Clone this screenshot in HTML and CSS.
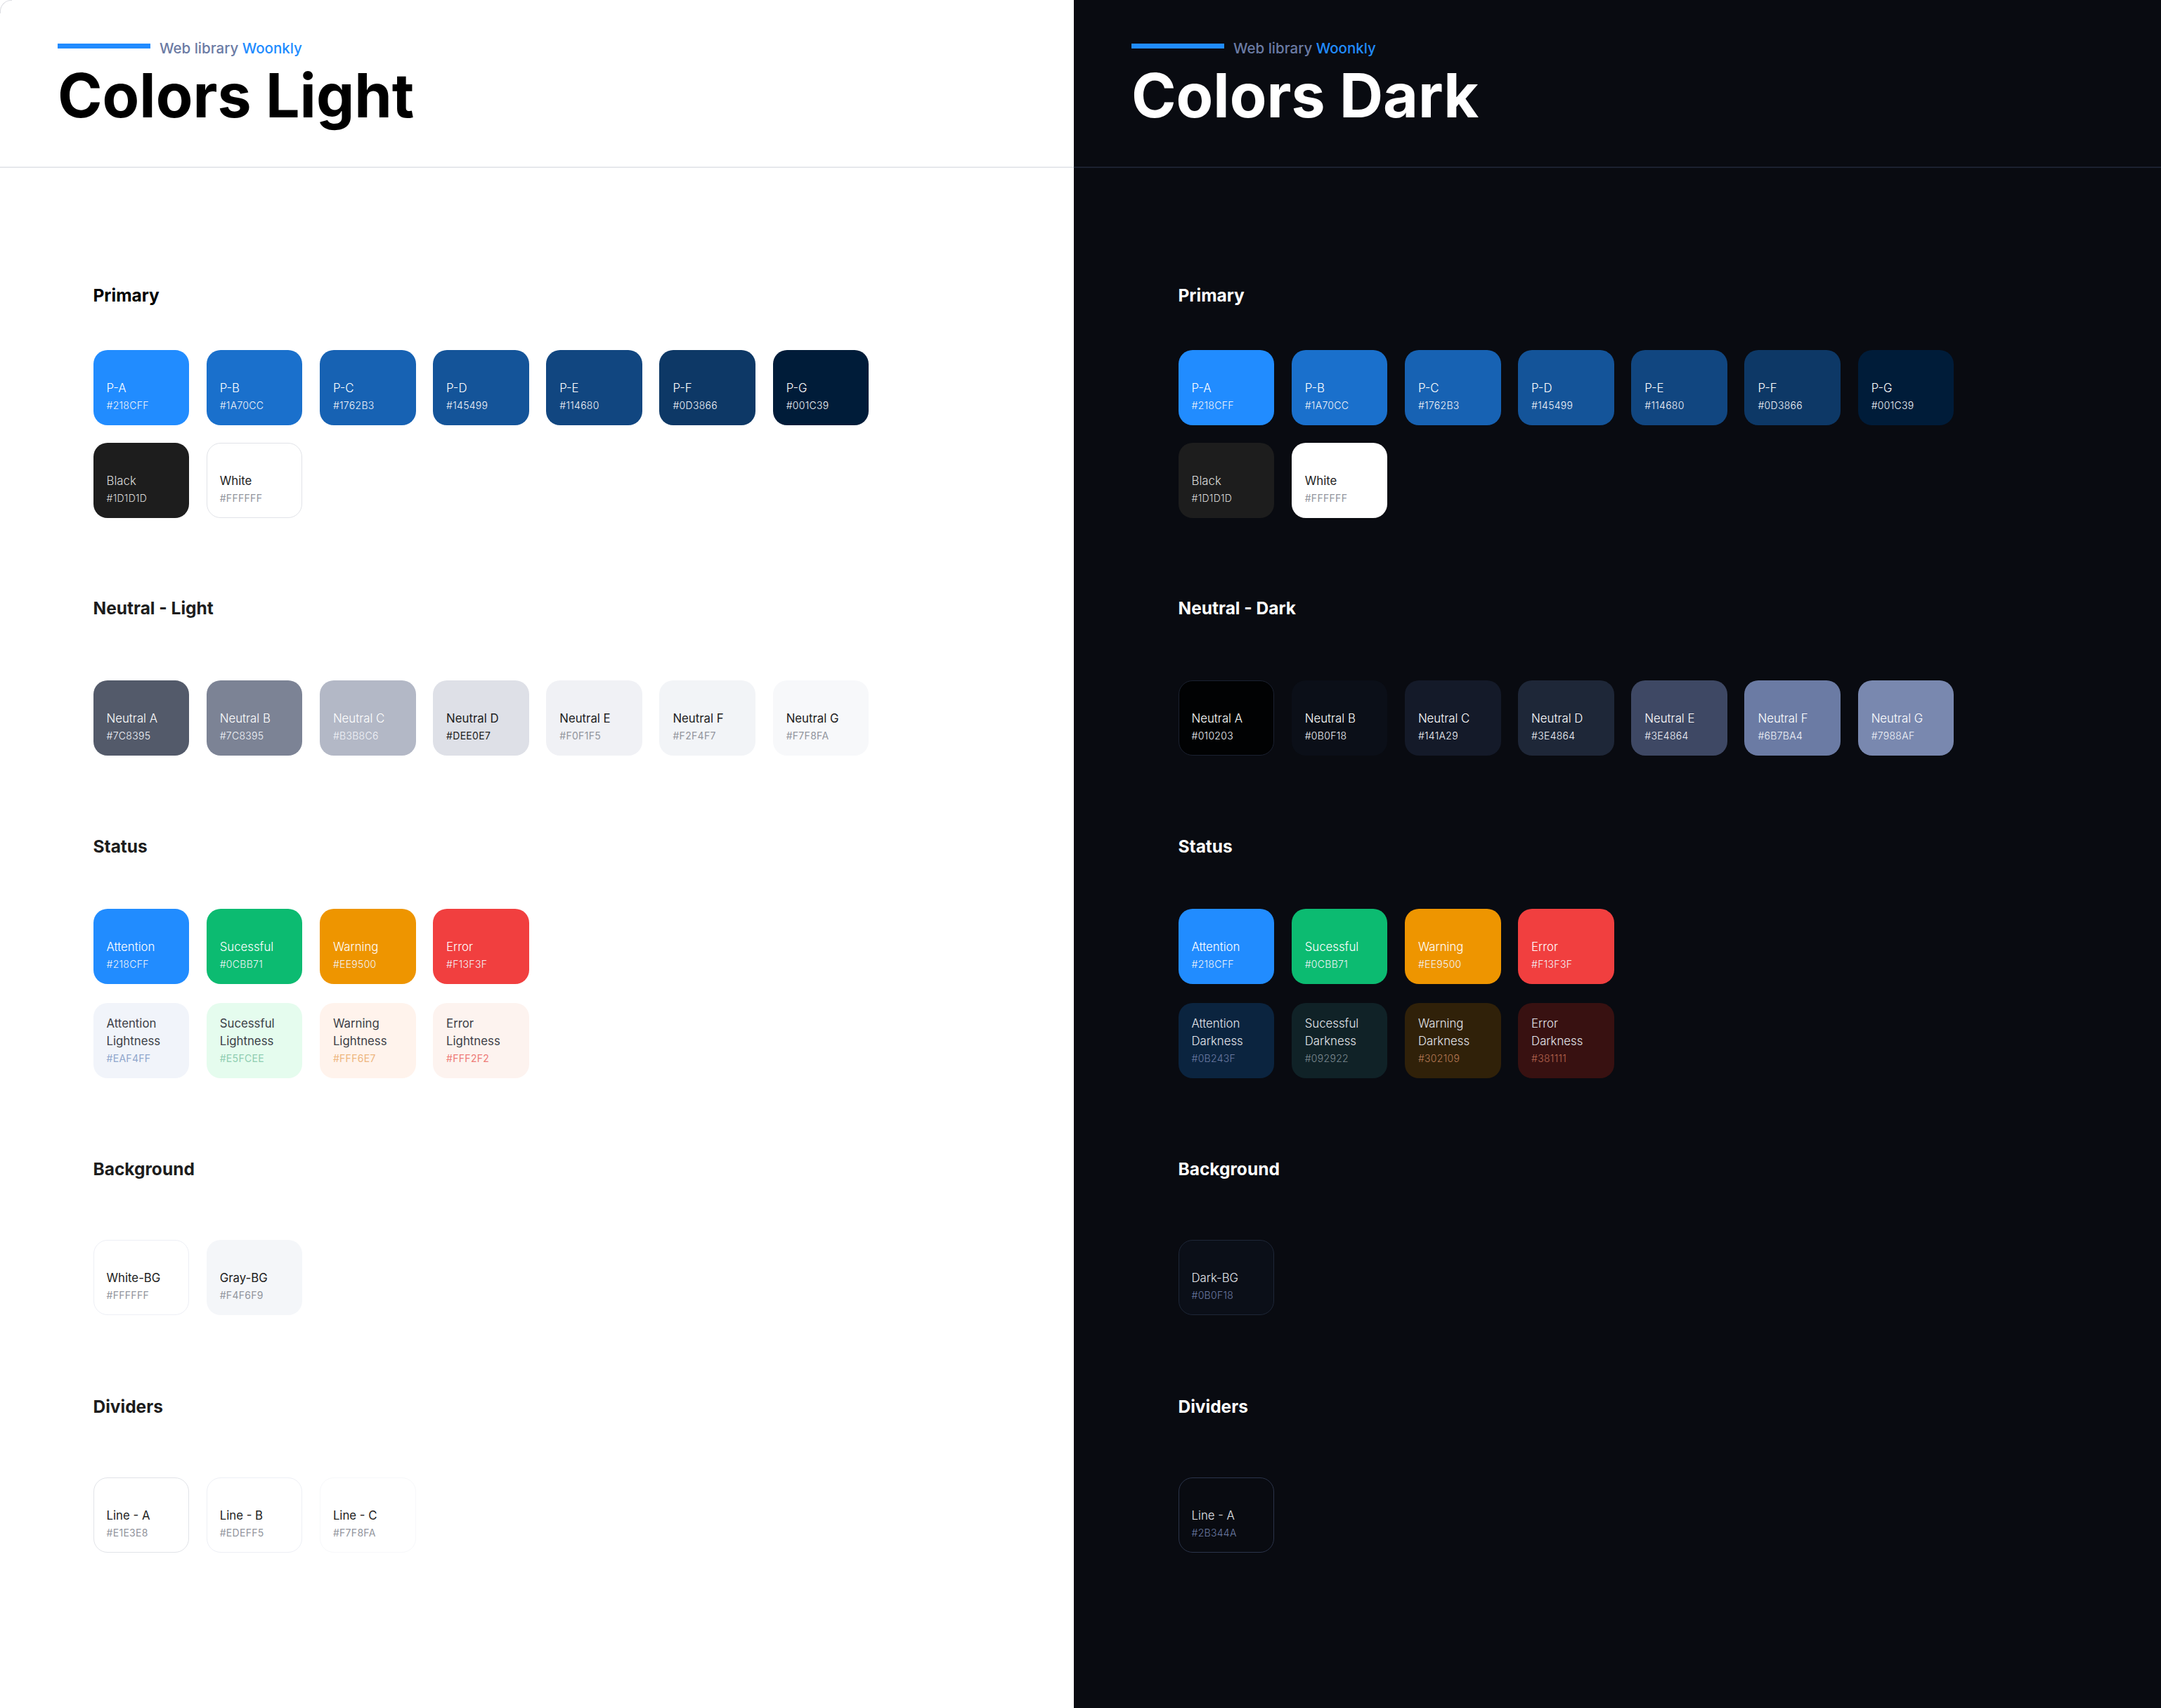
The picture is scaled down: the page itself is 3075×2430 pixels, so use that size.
FILE: index.html
```html
<!DOCTYPE html>
<html lang="en">
<head>
<meta charset="utf-8">
<title>Colors</title>
<link rel="stylesheet" href="styles.css">
</head>
<body>
<div class="board">
  <section class="panel light">
    <header class="head">
      <div class="eyebrow"><span class="bar"></span><span class="lib">Web library <b>Woonkly</b></span></div>
      <h1>Colors Light</h1>
    </header>
    <main class="body">
      <div class="group g-primary">
        <h2>Primary</h2>
        <div class="cards">
          <div class="card on-color pa"><span class="n">P-A</span><span class="h">#218CFF</span></div>
          <div class="card on-color pb"><span class="n">P-B</span><span class="h">#1A70CC</span></div>
          <div class="card on-color pc"><span class="n">P-C</span><span class="h">#1762B3</span></div>
          <div class="card on-color pd"><span class="n">P-D</span><span class="h">#145499</span></div>
          <div class="card on-color pe"><span class="n">P-E</span><span class="h">#114680</span></div>
          <div class="card on-color pf"><span class="n">P-F</span><span class="h">#0D3866</span></div>
          <div class="card on-color pg"><span class="n">P-G</span><span class="h">#001C39</span></div>
          <div class="card on-color black"><span class="n">Black</span><span class="h">#1D1D1D</span></div>
          <div class="card on-pale white line-a"><span class="n">White</span><span class="h">#FFFFFF</span></div>
        </div>
      </div>
      <div class="group g-neutral">
        <h2>Neutral - Light</h2>
        <div class="cards">
          <div class="card on-color nl-a"><span class="n">Neutral A</span><span class="h">#7C8395</span></div>
          <div class="card on-color nl-b"><span class="n">Neutral B</span><span class="h">#7C8395</span></div>
          <div class="card on-color nl-c"><span class="n">Neutral C</span><span class="h">#B3B8C6</span></div>
          <div class="card on-pale nl-d"><span class="n">Neutral D</span><span class="h dark-hex">#DEE0E7</span></div>
          <div class="card on-pale nl-e"><span class="n">Neutral E</span><span class="h">#F0F1F5</span></div>
          <div class="card on-pale nl-f"><span class="n">Neutral F</span><span class="h">#F2F4F7</span></div>
          <div class="card on-pale nl-g"><span class="n">Neutral G</span><span class="h">#F7F8FA</span></div>
        </div>
      </div>
      <div class="group g-status">
        <h2>Status</h2>
        <div class="cards cards-status">
          <div class="card on-color pa"><span class="n">Attention</span><span class="h">#218CFF</span></div>
          <div class="card on-color ok"><span class="n">Sucessful</span><span class="h">#0CBB71</span></div>
          <div class="card on-color warn"><span class="n">Warning</span><span class="h">#EE9500</span></div>
          <div class="card on-color err"><span class="n">Error</span><span class="h">#F13F3F</span></div>
          <div class="card on-pale at-l"><span class="n">Attention<br>Lightness</span><span class="h h-at">#EAF4FF</span></div>
          <div class="card on-pale ok-l"><span class="n">Sucessful<br>Lightness</span><span class="h h-ok">#E5FCEE</span></div>
          <div class="card on-pale wa-l"><span class="n">Warning<br>Lightness</span><span class="h h-wa">#FFF6E7</span></div>
          <div class="card on-pale er-l"><span class="n">Error<br>Lightness</span><span class="h h-er">#FFF2F2</span></div>
        </div>
      </div>
      <div class="group g-bg">
        <h2>Background</h2>
        <div class="cards">
          <div class="card on-pale white line-b"><span class="n">White-BG</span><span class="h">#FFFFFF</span></div>
          <div class="card on-pale gray-bg"><span class="n">Gray-BG</span><span class="h">#F4F6F9</span></div>
        </div>
      </div>
      <div class="group g-div">
        <h2>Dividers</h2>
        <div class="cards">
          <div class="card on-pale white line-a"><span class="n">Line - A</span><span class="h">#E1E3E8</span></div>
          <div class="card on-pale white line-b"><span class="n">Line - B</span><span class="h">#EDEFF5</span></div>
          <div class="card on-pale white line-c"><span class="n">Line - C</span><span class="h">#F7F8FA</span></div>
        </div>
      </div>
    </main>
  </section>

  <section class="panel dark">
    <header class="head">
      <div class="eyebrow"><span class="bar"></span><span class="lib">Web library <b>Woonkly</b></span></div>
      <h1>Colors Dark</h1>
    </header>
    <main class="body">
      <div class="group g-primary">
        <h2>Primary</h2>
        <div class="cards">
          <div class="card on-color pa"><span class="n">P-A</span><span class="h">#218CFF</span></div>
          <div class="card on-color pb"><span class="n">P-B</span><span class="h">#1A70CC</span></div>
          <div class="card on-color pc"><span class="n">P-C</span><span class="h">#1762B3</span></div>
          <div class="card on-color pd"><span class="n">P-D</span><span class="h">#145499</span></div>
          <div class="card on-color pe"><span class="n">P-E</span><span class="h">#114680</span></div>
          <div class="card on-color pf"><span class="n">P-F</span><span class="h">#0D3866</span></div>
          <div class="card on-color pg"><span class="n">P-G</span><span class="h">#001C39</span></div>
          <div class="card on-color black"><span class="n">Black</span><span class="h">#1D1D1D</span></div>
          <div class="card on-pale white"><span class="n">White</span><span class="h">#FFFFFF</span></div>
        </div>
      </div>
      <div class="group g-neutral">
        <h2>Neutral - Dark</h2>
        <div class="cards">
          <div class="card on-color nd-a"><span class="n">Neutral A</span><span class="h">#010203</span></div>
          <div class="card on-color nd-b"><span class="n">Neutral B</span><span class="h">#0B0F18</span></div>
          <div class="card on-color nd-c"><span class="n">Neutral C</span><span class="h">#141A29</span></div>
          <div class="card on-color nd-d"><span class="n">Neutral D</span><span class="h">#3E4864</span></div>
          <div class="card on-color nd-e"><span class="n">Neutral E</span><span class="h">#3E4864</span></div>
          <div class="card on-color nd-f"><span class="n">Neutral F</span><span class="h">#6B7BA4</span></div>
          <div class="card on-color nd-g"><span class="n">Neutral G</span><span class="h">#7988AF</span></div>
        </div>
      </div>
      <div class="group g-status">
        <h2>Status</h2>
        <div class="cards cards-status">
          <div class="card on-color pa"><span class="n">Attention</span><span class="h">#218CFF</span></div>
          <div class="card on-color ok"><span class="n">Sucessful</span><span class="h">#0CBB71</span></div>
          <div class="card on-color warn"><span class="n">Warning</span><span class="h">#EE9500</span></div>
          <div class="card on-color err"><span class="n">Error</span><span class="h">#F13F3F</span></div>
          <div class="card on-deep at-d"><span class="n">Attention<br>Darkness</span><span class="h hd-at">#0B243F</span></div>
          <div class="card on-deep ok-d"><span class="n">Sucessful<br>Darkness</span><span class="h hd-ok">#092922</span></div>
          <div class="card on-deep wa-d"><span class="n">Warning<br>Darkness</span><span class="h hd-wa">#302109</span></div>
          <div class="card on-deep er-d"><span class="n">Error<br>Darkness</span><span class="h hd-er">#381111</span></div>
        </div>
      </div>
      <div class="group g-bg">
        <h2>Background</h2>
        <div class="cards">
          <div class="card on-deep dark-bg"><span class="n">Dark-BG</span><span class="h hd-muted">#0B0F18</span></div>
        </div>
      </div>
      <div class="group g-div">
        <h2>Dividers</h2>
        <div class="cards">
          <div class="card on-deep line-d"><span class="n">Line - A</span><span class="h hd-muted">#2B344A</span></div>
        </div>
      </div>
    </main>
  </section>
</div>
</body>
</html>
```
FILE: styles.css
```css
* { box-sizing: border-box; }
html, body { margin: 0; padding: 0; background: #fff; }
body { font-family: Inter, "Liberation Sans", sans-serif; }
.board { display: grid; grid-template-columns: 1528px 1547px; width: 3075px; height: 2430px; overflow: hidden; }
.panel { height: 2430px; position: relative; }
.light { background: #fff; color: #000; }
.light::before { content: ""; position: absolute; left: 0; top: 0; width: 16px; height: 18px; border-top: 1px solid #dcdde2; border-left: 1px solid #dcdde2; border-top-left-radius: 16px; }
.dark { background: #090b11; color: #fff; }

.head { height: 239px; padding: 57px 0 0 82px; border-bottom: 2px solid #e6e8ec; }
.dark .head { border-bottom-color: #1b2130; }
.eyebrow { display: flex; align-items: center; gap: 13px; height: 24px; }
.bar { width: 132px; height: 7px; background: #218cff; margin-top: -7px; }
.lib { font-size: 20.5px; font-weight: 500; line-height: 24px; color: #6b7ba4; }
.lib b { font-weight: 500; color: #218cff; }
h1 { margin: 7px 0 0 0; font-size: 86px; line-height: 96px; font-weight: 700; letter-spacing: 0; }

.body { padding-left: 132.5px; }
.dark .body { padding-left: 148.5px; }
h2 { margin: 0; font-size: 24.5px; line-height: 30px; font-weight: 700; color: #1d1d1d; }
.light .g-primary h2 { color: #000; }
.dark h2 { color: #fff; }
.g-primary { padding-top: 166px; }
.g-primary h2 { margin-bottom: 63px; }
.g-neutral { padding-top: 113px; }
.g-neutral h2 { margin-bottom: 88px; }
.g-status { padding-top: 114px; }
.g-status h2 { margin-bottom: 74px; }
.g-bg { padding-top: 114px; }
.g-bg h2 { margin-bottom: 86px; }
.g-div { padding-top: 115px; }
.g-div h2 { margin-bottom: 86px; }

.cards { display: grid; grid-template-columns: repeat(7, 136.7px); column-gap: 24.5px; row-gap: 25px; }
.cards-status { grid-template-columns: repeat(4, 136.7px); row-gap: 27px; }
.card { height: 107px; border-radius: 20px; padding: 0 18px 15px; display: flex; flex-direction: column; justify-content: flex-end; border: 1px solid transparent; }
.n { font-size: 16.8px; line-height: 24.5px; font-weight: 350; margin-bottom: 1px; }
.h { font-size: 14px; line-height: 24px; font-weight: 350; letter-spacing: .3px; }

.on-color .n { color: #fff; }
.on-color .h { color: #f1f3f8; }
.on-pale .n { color: #1d1d1d; font-weight: 400; }
.on-pale .h { color: #92959d; font-weight: 400; }
.on-deep .n { color: #e4e6ec; }

.pa { background: #218cff; }
.pb { background: #1a70cc; }
.pc { background: #1762b3; }
.pd { background: #145499; }
.pe { background: #114680; }
.pf { background: #0d3866; }
.pg { background: #001c39; }
.black { background: #1d1d1d; }
.on-color.black .n, .on-color.black .h { color: #dcdcdc; }
.white { background: #fff; }
.line-a { border-color: #e1e3e8; }
.line-b { border-color: #edeff5; }
.line-c { border-color: #f7f8fa; }

.nl-a { background: #535a6a; }
.nl-b { background: #7c8395; }
.nl-c { background: #b3b8c6; }
.nl-d { background: #dee0e7; }
.nl-e { background: #f0f1f5; }
.nl-f { background: #f2f4f7; }
.nl-g { background: #f7f8fa; }
.on-pale .dark-hex { color: #1d1d1d; }

.ok { background: #0cbb71; }
.warn { background: #ee9500; }
.err { background: #f13f3f; }
.at-l { background: #f1f4fa; }
.ok-l { background: #e5fcee; }
.wa-l { background: #fff3ec; }
.er-l { background: #fdf3ef; }
.at-l .n, .ok-l .n, .wa-l .n, .er-l .n { color: #3c3f47; }
.on-pale .h-at { color: #8fa6cc; }
.on-pale .h-ok { color: #8fcdb0; }
.on-pale .h-wa { color: #eeb67e; }
.on-pale .h-er { color: #ee7b77; }
.gray-bg { background: #f4f6f9; }

.nd-a { background: #010203; border-color: #1b2130; }
.nd-b { background: #0b0f18; }
.nd-c { background: #141a29; }
.nd-d { background: #1e2738; }
.nd-e { background: #3e4864; }
.nd-f { background: #6b7ba4; }
.nd-g { background: #7988af; }
.at-d { background: #0b243f; }
.ok-d { background: #102227; }
.wa-d { background: #302109; }
.er-d { background: #381111; }
.hd-at { color: #6b7ba4; }
.hd-ok { color: #7d8a92; }
.hd-wa { color: #b87a55; }
.hd-er { color: #b96650; }
.dark-bg { background: #0b0f18; border-color: #1e2738; }
.line-d { background: #090b11; border-color: #2b344a; }
.hd-muted { color: #6b7ba4; }
```
